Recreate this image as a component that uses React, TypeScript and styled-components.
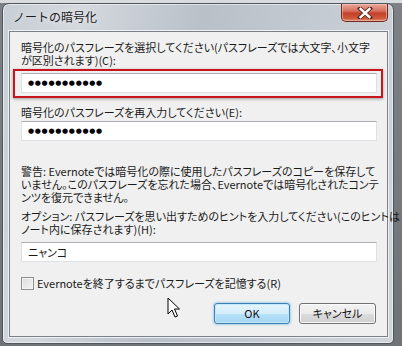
import React from 'react'
import styled, { createGlobalStyle } from 'styled-components'

const GlobalStyle = createGlobalStyle`
    html, body {
        margin: 0;
        padding: 0;
    }
    body {
        width: 402px;
        height: 346px;
        overflow: hidden;
        background: linear-gradient(180deg, #d9dcdf 0px, #d9dcdf 3px, #7d8084 3px, #6f7276 100%);
        font-family: 'Noto Sans CJK JP', 'Noto Sans', sans-serif;
    }
`

const Screen = styled.div`
    position: relative;
    width: 402px;
    height: 346px;
    padding: 3px 0 0 2px;
    box-sizing: border-box;
`

const Window = styled.div`
    width: 392px;
    height: 341px;
    box-sizing: border-box;
    display: flex;
    flex-direction: column;
    padding: 0 5px 6px 6px;
    border: 1px solid #50565d;
    border-radius: 7px 7px 5px 5px;
    background: linear-gradient(100deg, #c8ced5 0%, #d3d8dd 18%, #b9c0c8 45%, #c4cad1 70%, #d0d5da 100%);
    box-shadow: inset 0 0 0 1px rgba(255, 255, 255, 0.55);
`

const TitleBar = styled.div`
    height: 27px;
    flex: none;
    display: flex;
    align-items: flex-start;
    justify-content: space-between;
`

const Title = styled.div`
    margin: 6px 0 0 4px;
    font-size: 12px;
    line-height: 14px;
    color: #1b1b20;
    text-shadow: 0 0 6px rgba(255, 255, 255, 0.9);
`

const CloseButton = styled.div`
    width: 47px;
    height: 18px;
    box-sizing: border-box;
    border: 1px solid #6e2a20;
    border-top: none;
    border-radius: 0 0 5px 5px;
    background: linear-gradient(180deg, #e9a899 0%, #d8735e 40%, #c2412a 55%, #cf5a3c 85%, #e08a6a 100%);
    box-shadow: inset 0 0 0 1px rgba(255, 210, 200, 0.5);
    display: flex;
    align-items: center;
    justify-content: center;
`

const Client = styled.div`
    flex: 1;
    position: relative;
    display: flex;
    flex-direction: column;
    padding: 9px 11px 0 11px;
    background: #f0f0f0;
    border: 1px solid #7c8189;
    box-shadow: 0 0 0 1px #eef1f4;
    font-size: 11px;
    line-height: 13px;
    color: #1a1a1a;
    font-feature-settings: 'palt';
`

const Label = styled.div<{ $top: number }>`
    margin-top: ${({ $top }) => $top}px;
    white-space: nowrap;
`

const Highlight = styled.div`
    position: relative;
    margin-top: 6px;

    &::after {
        content: '';
        position: absolute;
        left: -8px;
        right: -7px;
        top: -4px;
        bottom: -5px;
        border: 2px solid #c8141c;
        box-shadow: 0 1px 3px rgba(0, 0, 0, 0.35);
        pointer-events: none;
    }
`

const Field = styled.div<{ $top?: number }>`
    margin-top: ${({ $top }) => $top ?? 0}px;
    height: 20px;
    width: 356px;
    box-sizing: border-box;
    border: 1px solid #dde1e6;
    border-top-color: #abadb3;
    background: #fff;
    display: flex;
    align-items: center;
    padding-left: 6px;
    font-size: 11px;
`

const Dots = styled.span`
    font-family: 'DejaVu Sans', sans-serif;
    font-size: 7px;
    letter-spacing: 0.7px;
    color: #000;
`

const CheckRow = styled.label`
    margin-top: 15px;
    display: flex;
    align-items: center;
    gap: 3px;
    height: 13px;
`

const CheckBox = styled.span`
    width: 13px;
    height: 13px;
    box-sizing: border-box;
    border: 1px solid #8f8f8f;
    background: linear-gradient(135deg, #dcdcdc 0%, #f4f4f4 100%);
    box-shadow: inset 0 0 0 1px #f4f4f4;
`

const ButtonRow = styled.div`
    margin-top: 13px;
    display: flex;
    justify-content: flex-end;
    gap: 9px;
`

const Button = styled.div<{ $primary?: boolean }>`
    width: ${({ $primary }) => ($primary ? 76 : 77)}px;
    height: 21px;
    box-sizing: border-box;
    border-radius: 3px;
    display: flex;
    align-items: center;
    justify-content: center;
    font-size: 11px;
    color: #111;
    border: 1px solid ${({ $primary }) => ($primary ? '#3c7fb1' : '#707070')};
    background: ${({ $primary }) =>
        $primary
            ? 'linear-gradient(180deg, #e5f4fc 0%, #d4eefb 50%, #b8e2f8 51%, #a3d5f3 100%)'
            : 'linear-gradient(180deg, #f2f2f2 0%, #ebebeb 50%, #dddddd 51%, #cfcfcf 100%)'};
    box-shadow: inset 0 0 0 1px ${({ $primary }) => ($primary ? '#c6e8fb' : '#fcfcfc')}
        ${({ $primary }) => ($primary ? ', 0 0 2px 1px rgba(90, 170, 230, 0.45)' : '')};
`

const Pointer = styled.svg`
    position: absolute;
    left: 167px;
    top: 297px;
`

const dots = '●●●●●●●●●●●'

const App = () => {
    return (
        <>
            <GlobalStyle />
            <Screen>
                <Window>
                    <TitleBar>
                        <Title>ノートの暗号化</Title>
                        <CloseButton>
                            <svg width="16" height="12" viewBox="0 0 16 12">
                                <path
                                    d="M3 1.5 L13 10.5 M13 1.5 L3 10.5"
                                    stroke="#5a2a24"
                                    strokeWidth="4.2"
                                    strokeLinecap="square"
                                />
                                <path
                                    d="M3.6 2 L12.4 10 M12.4 2 L3.6 10"
                                    stroke="#ffffff"
                                    strokeWidth="2.4"
                                    strokeLinecap="square"
                                />
                            </svg>
                        </CloseButton>
                    </TitleBar>
                    <Client>
                        <Label $top={0}>
                            暗号化のパスフレーズを選択してください(パスフレーズでは大文字、小文字
                            <br />
                            が区別されます)(C):
                        </Label>
                        <Highlight>
                            <Field>
                                <Dots>{dots}</Dots>
                            </Field>
                        </Highlight>
                        <Label $top={13}>暗号化のパスフレーズを再入力してください(E):</Label>
                        <Field $top={2}>
                            <Dots>{dots}</Dots>
                        </Field>
                        <Label $top={24}>
                            警告: Evernoteでは暗号化の際に使用したパスフレーズのコピーを保存して
                            <br />
                            いません。このパスフレーズを忘れた場合、Evernoteでは暗号化されたコンテ
                            <br />
                            ンツを復元できません。
                        </Label>
                        <Label $top={6}>
                            オプション: パスフレーズを思い出すためのヒントを入力してください(このヒントは
                            <br />
                            ノート内に保存されます)(H):
                        </Label>
                        <Field $top={6}>ニャンコ</Field>
                        <CheckRow>
                            <CheckBox />
                            Evernoteを終了するまでパスフレーズを記憶する(R)
                        </CheckRow>
                        <ButtonRow>
                            <Button $primary>OK</Button>
                            <Button>キャンセル</Button>
                        </ButtonRow>
                    </Client>
                </Window>
                <Pointer width="14" height="22" viewBox="0 0 14 22">
                    <path
                        d="M1 1 L1 17 L5 13 L8 20 L10.5 19 L7.5 12 L12.5 12 Z"
                        fill="#ffffff"
                        stroke="#000000"
                        strokeWidth="1"
                        strokeLinejoin="round"
                    />
                </Pointer>
            </Screen>
        </>
    )
}

export default App
